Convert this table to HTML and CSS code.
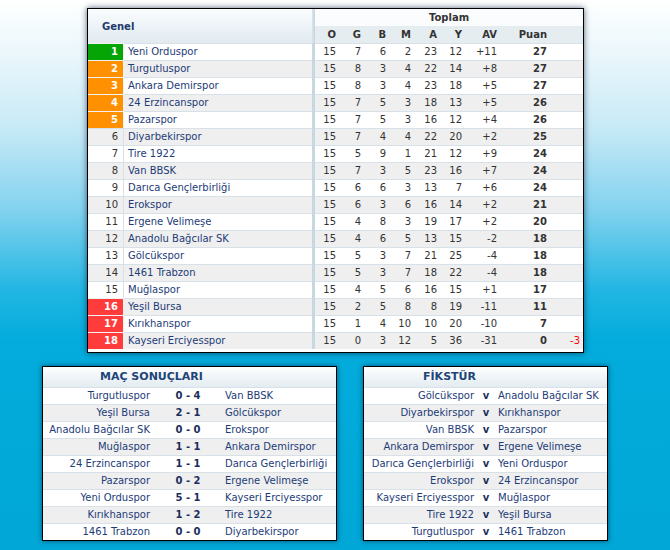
FILE: index.html
```html
<!DOCTYPE html>
<html lang="tr">
<head>
<meta charset="utf-8">
<title>Puan Durumu</title>
<link rel="stylesheet" href="styles.css">
</head>
<body>
<div class="page">
  <div class="standings">
    <table class="st">
      <colgroup>
        <col class="c-rank"><col class="c-name"><col class="c-sep">
        <col class="c-n"><col class="c-n"><col class="c-n"><col class="c-n">
        <col class="c-a"><col class="c-n"><col class="c-av"><col class="c-p"><col class="c-x">
      </colgroup>
      <thead>
        <tr class="ha">
          <th class="genel" colspan="2" rowspan="2">Genel</th>
          <th class="sep" rowspan="2"></th>
          <th class="toplam" colspan="9">Toplam</th>
        </tr>
        <tr class="hb">
          <th>O</th><th>G</th><th>B</th><th>M</th><th>A</th><th>Y</th><th>AV</th><th>Puan</th><th></th>
        </tr>
      </thead>
      <tbody>
        <tr><td class="rk green">1</td><td class="nm">Yeni Orduspor</td><td class="sep"></td><td>15</td><td>7</td><td>6</td><td>2</td><td>23</td><td>12</td><td>+11</td><td class="pts">27</td><td class="x"></td></tr>
        <tr><td class="rk orange">2</td><td class="nm">Turgutluspor</td><td class="sep"></td><td>15</td><td>8</td><td>3</td><td>4</td><td>22</td><td>14</td><td>+8</td><td class="pts">27</td><td class="x"></td></tr>
        <tr><td class="rk orange">3</td><td class="nm">Ankara Demirspor</td><td class="sep"></td><td>15</td><td>8</td><td>3</td><td>4</td><td>23</td><td>18</td><td>+5</td><td class="pts">27</td><td class="x"></td></tr>
        <tr><td class="rk orange">4</td><td class="nm">24 Erzincanspor</td><td class="sep"></td><td>15</td><td>7</td><td>5</td><td>3</td><td>18</td><td>13</td><td>+5</td><td class="pts">26</td><td class="x"></td></tr>
        <tr><td class="rk orange">5</td><td class="nm">Pazarspor</td><td class="sep"></td><td>15</td><td>7</td><td>5</td><td>3</td><td>16</td><td>12</td><td>+4</td><td class="pts">26</td><td class="x"></td></tr>
        <tr><td class="rk">6</td><td class="nm">Diyarbekirspor</td><td class="sep"></td><td>15</td><td>7</td><td>4</td><td>4</td><td>22</td><td>20</td><td>+2</td><td class="pts">25</td><td class="x"></td></tr>
        <tr><td class="rk">7</td><td class="nm">Tire 1922</td><td class="sep"></td><td>15</td><td>5</td><td>9</td><td>1</td><td>21</td><td>12</td><td>+9</td><td class="pts">24</td><td class="x"></td></tr>
        <tr><td class="rk">8</td><td class="nm">Van BBSK</td><td class="sep"></td><td>15</td><td>7</td><td>3</td><td>5</td><td>23</td><td>16</td><td>+7</td><td class="pts">24</td><td class="x"></td></tr>
        <tr><td class="rk">9</td><td class="nm">Darıca Gençlerbirliği</td><td class="sep"></td><td>15</td><td>6</td><td>6</td><td>3</td><td>13</td><td>7</td><td>+6</td><td class="pts">24</td><td class="x"></td></tr>
        <tr><td class="rk">10</td><td class="nm">Erokspor</td><td class="sep"></td><td>15</td><td>6</td><td>3</td><td>6</td><td>16</td><td>14</td><td>+2</td><td class="pts">21</td><td class="x"></td></tr>
        <tr><td class="rk">11</td><td class="nm">Ergene Velimeşe</td><td class="sep"></td><td>15</td><td>4</td><td>8</td><td>3</td><td>19</td><td>17</td><td>+2</td><td class="pts">20</td><td class="x"></td></tr>
        <tr><td class="rk">12</td><td class="nm">Anadolu Bağcılar SK</td><td class="sep"></td><td>15</td><td>4</td><td>6</td><td>5</td><td>13</td><td>15</td><td>-2</td><td class="pts">18</td><td class="x"></td></tr>
        <tr><td class="rk">13</td><td class="nm">Gölcükspor</td><td class="sep"></td><td>15</td><td>5</td><td>3</td><td>7</td><td>21</td><td>25</td><td>-4</td><td class="pts">18</td><td class="x"></td></tr>
        <tr><td class="rk">14</td><td class="nm">1461 Trabzon</td><td class="sep"></td><td>15</td><td>5</td><td>3</td><td>7</td><td>18</td><td>22</td><td>-4</td><td class="pts">18</td><td class="x"></td></tr>
        <tr><td class="rk">15</td><td class="nm">Muğlaspor</td><td class="sep"></td><td>15</td><td>4</td><td>5</td><td>6</td><td>16</td><td>15</td><td>+1</td><td class="pts">17</td><td class="x"></td></tr>
        <tr><td class="rk red">16</td><td class="nm">Yeşil Bursa</td><td class="sep"></td><td>15</td><td>2</td><td>5</td><td>8</td><td>8</td><td>19</td><td>-11</td><td class="pts">11</td><td class="x"></td></tr>
        <tr><td class="rk red">17</td><td class="nm">Kırıkhanspor</td><td class="sep"></td><td>15</td><td>1</td><td>4</td><td>10</td><td>10</td><td>20</td><td>-10</td><td class="pts">7</td><td class="x"></td></tr>
        <tr><td class="rk red">18</td><td class="nm">Kayseri Erciyesspor</td><td class="sep"></td><td>15</td><td>0</td><td>3</td><td>12</td><td>5</td><td>36</td><td>-31</td><td class="pts">0</td><td class="x">-3</td></tr>
      </tbody>
    </table>
  </div>

  <div class="panels">
    <div class="panel results">
      <table class="pt">
        <colgroup><col class="r-home"><col class="r-score"><col class="r-away"></colgroup>
        <thead><tr><th colspan="3" class="title">MAÇ SONUÇLARI</th></tr></thead>
        <tbody>
          <tr><td class="home">Turgutluspor</td><td class="score">0 - 4</td><td class="away">Van BBSK</td></tr>
          <tr><td class="home">Yeşil Bursa</td><td class="score">2 - 1</td><td class="away">Gölcükspor</td></tr>
          <tr><td class="home">Anadolu Bağcılar SK</td><td class="score">0 - 0</td><td class="away">Erokspor</td></tr>
          <tr><td class="home">Muğlaspor</td><td class="score">1 - 1</td><td class="away">Ankara Demirspor</td></tr>
          <tr><td class="home">24 Erzincanspor</td><td class="score">1 - 1</td><td class="away">Darıca Gençlerbirliği</td></tr>
          <tr><td class="home">Pazarspor</td><td class="score">0 - 2</td><td class="away">Ergene Velimeşe</td></tr>
          <tr><td class="home">Yeni Orduspor</td><td class="score">5 - 1</td><td class="away">Kayseri Erciyesspor</td></tr>
          <tr><td class="home">Kırıkhanspor</td><td class="score">1 - 2</td><td class="away">Tire 1922</td></tr>
          <tr><td class="home">1461 Trabzon</td><td class="score">0 - 0</td><td class="away">Diyarbekirspor</td></tr>
        </tbody>
      </table>
    </div>
    <div class="panel fixtures">
      <table class="pt">
        <colgroup><col class="f-home"><col class="f-v"><col class="f-away"></colgroup>
        <thead><tr><th colspan="3" class="title">FİKSTÜR</th></tr></thead>
        <tbody>
          <tr><td class="home">Gölcükspor</td><td class="vs">v</td><td class="away">Anadolu Bağcılar SK</td></tr>
          <tr><td class="home">Diyarbekirspor</td><td class="vs">v</td><td class="away">Kırıkhanspor</td></tr>
          <tr><td class="home">Van BBSK</td><td class="vs">v</td><td class="away">Pazarspor</td></tr>
          <tr><td class="home">Ankara Demirspor</td><td class="vs">v</td><td class="away">Ergene Velimeşe</td></tr>
          <tr><td class="home">Darıca Gençlerbirliği</td><td class="vs">v</td><td class="away">Yeni Orduspor</td></tr>
          <tr><td class="home">Erokspor</td><td class="vs">v</td><td class="away">24 Erzincanspor</td></tr>
          <tr><td class="home">Kayseri Erciyesspor</td><td class="vs">v</td><td class="away">Muğlaspor</td></tr>
          <tr><td class="home">Tire 1922</td><td class="vs">v</td><td class="away">Yeşil Bursa</td></tr>
          <tr><td class="home">Turgutluspor</td><td class="vs">v</td><td class="away">1461 Trabzon</td></tr>
        </tbody>
      </table>
    </div>
  </div>
</div>
</body>
</html>
```

FILE: styles.css
```css
html, body {
  margin: 0;
  padding: 0;
}
body {
  width: 670px;
  height: 550px;
  overflow: hidden;
  font-family: "DejaVu Sans", Verdana, sans-serif;
  font-size: 10px;
  color: #333;
  background: linear-gradient(to bottom,
    #ffffff 0px,
    #e8f6fb 60px,
    #c6e9f6 130px,
    #82d2ef 210px,
    #22b6e3 290px,
    #03acdc 340px,
    #00a7d7 550px);
}
.page {
  padding: 8px 0 0 42px;
}
.standings {
  margin-left: 45px;
  width: 495px;
  border: 1px solid #000;
  background: #fff;
  padding-bottom: 3px;
  box-shadow: 0 0 6px rgba(0, 20, 50, 0.65);
}
table {
  border-collapse: separate;
  border-spacing: 0;
  table-layout: fixed;
}
.st {
  width: 495px;
}
.c-rank { width: 36px; }
.c-name { width: 188px; }
.c-sep { width: 3px; }
.c-n { width: 25px; }
.c-a { width: 26px; }
.c-av { width: 35px; }
.c-p { width: 50px; }
.c-x { width: 32px; }

.st th, .st td {
  padding: 0 4px 0 0;
  height: 16px;
  line-height: 16px;
  text-align: right;
  white-space: nowrap;
  overflow: hidden;
}
.st th {
  height: 17px;
  line-height: 17px;
  font-weight: bold;
  color: #333;
}
.st .genel {
  text-align: left;
  padding-left: 14px;
  color: #1c3a6c;
  background: linear-gradient(to bottom, #fbfdfe 0%, #eef4f8 45%, #e2eaf0 100%);
}
.st .toplam {
  text-align: center;
  padding: 0 0 0 0;
  background: #fbfcfd;
}
.st .hb th {
  background: #e6edf1;
}
.st .sep {
  padding: 0;
  background: #c8d7e0;
  border-top-color: #c8d7e0 !important;
}
.st th.sep {
  background: linear-gradient(to right, #dbe6ec, #c4d4de);
}
.st td {
  border-top: 1px solid #d8e1e7;
}
.st tbody tr:nth-child(even) td {
  background-color: #efefef;
}
.st tbody tr:nth-child(even) td.sep {
  background-color: #c8d7e0;
}
.st .rk {
  padding-right: 5px;
  border-right: 1px solid #d8e1e7;
}
.st .rk.green,
.st .rk.orange,
.st .rk.red {
  color: #fff;
  font-weight: bold;
  border-top-color: #f2f2f2;
  border-right-color: #f2f2f2;
}
.st tbody tr td.rk.green { background-color: #04a504; }
.st tbody tr td.rk.orange { background-color: #ff9000; }
.st tbody tr td.rk.red { background-color: #ff3b3b; }
.st .nm {
  text-align: left;
  padding-left: 4px;
  color: #1d3c78;
}
.st .pts {
  font-weight: bold;
}
.st .x {
  padding-right: 3px;
  color: #f00;
}

.panels {
  display: flex;
  gap: 26px;
  margin-top: 13px;
}
.panel {
  border: 1px solid #000;
  background: #fff;
  box-shadow: 0 0 5px rgba(0, 20, 50, 0.6);
}
.results .pt { width: 293px; }
.fixtures .pt { width: 243px; }
.r-home { width: 112px; }
.r-score { width: 66px; }
.r-away { width: 115px; }
.f-home { width: 115px; }
.f-v { width: 14px; }
.f-away { width: 114px; }

.pt th.title {
  height: 20px;
  line-height: 20px;
  padding: 0;
  text-align: left;
  font-size: 11px;
  font-weight: bold;
  color: #1f4477;
  background: linear-gradient(to bottom, #ffffff 0%, #f0f5f8 50%, #e3ecf1 100%);
}
.results th.title { padding-left: 57px; }
.fixtures th.title { padding-left: 59px; }
.pt td {
  height: 16px;
  line-height: 16px;
  padding: 0;
  border-top: 1px solid #d8e1e7;
  white-space: nowrap;
  overflow: hidden;
  color: #1d3c78;
}
.pt tbody tr:nth-child(even) td {
  background: #efefef;
}
.pt .home {
  text-align: right;
  padding-right: 5px;
}
.pt .away {
  text-align: left;
  padding-left: 4px;
}
.fixtures .away { padding-left: 5px; }
.pt .score {
  text-align: center;
  font-weight: bold;
  color: #1c2f5c;
}
.pt .vs {
  text-align: center;
  font-weight: bold;
  color: #1c2f5c;
}
```
